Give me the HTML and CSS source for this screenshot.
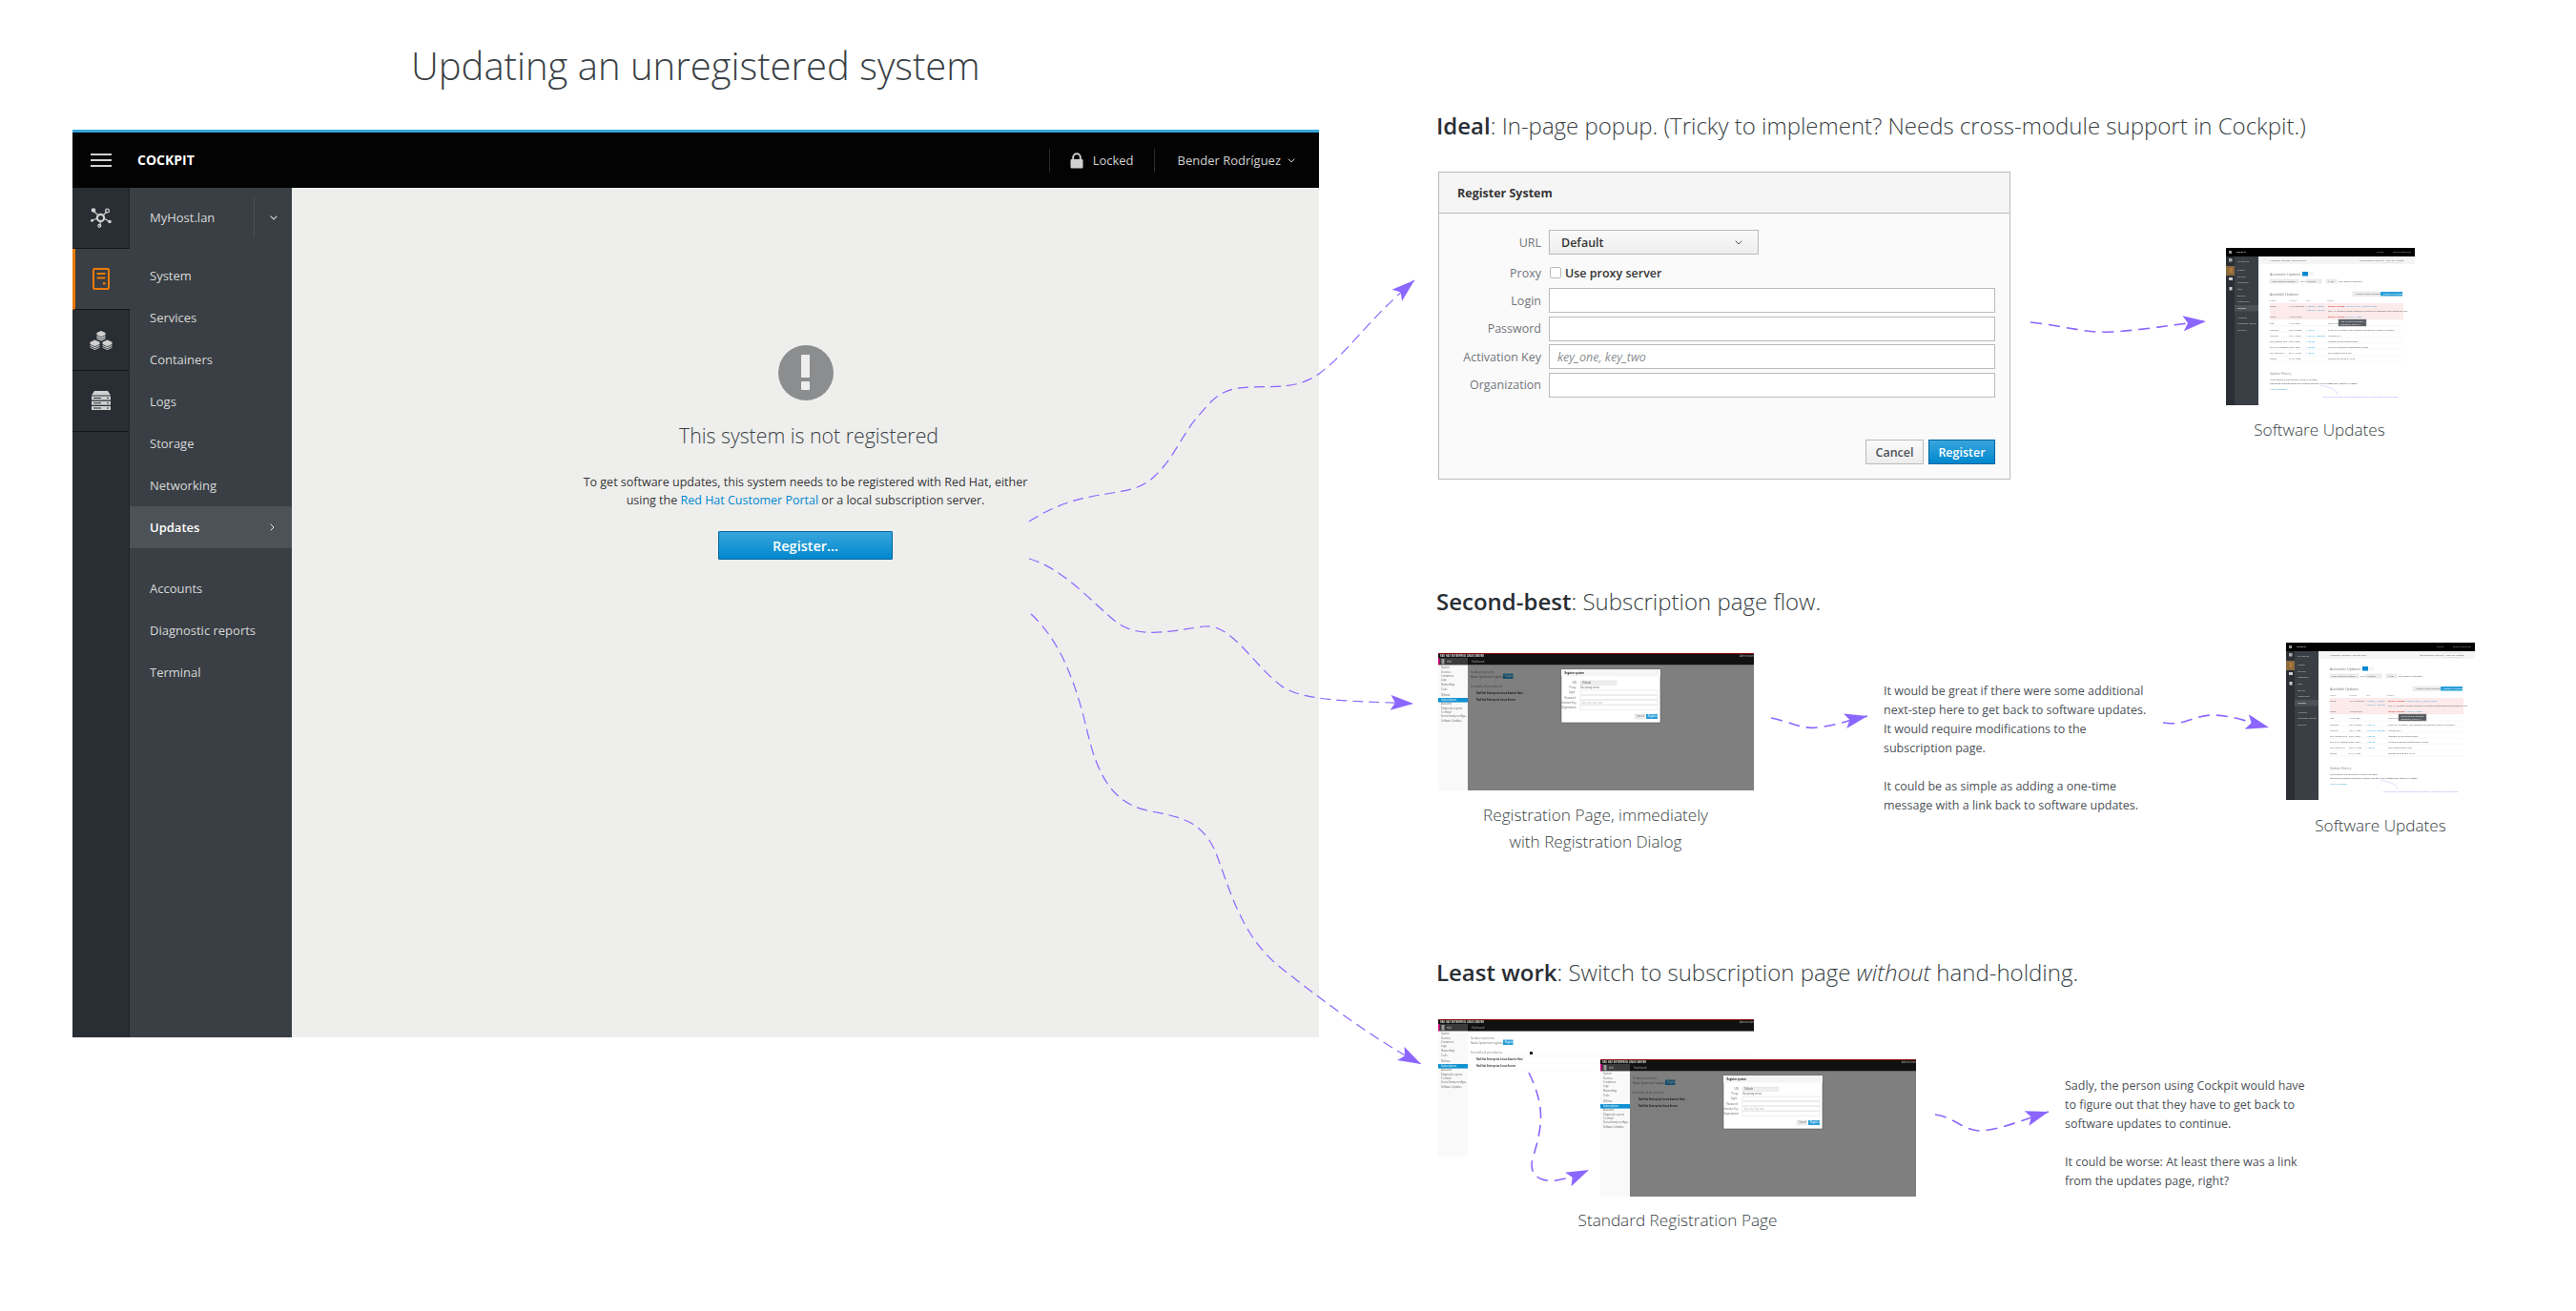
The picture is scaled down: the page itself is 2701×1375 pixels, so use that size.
FILE: index.html
```html
<!DOCTYPE html>
<html lang="en">
<head>
    <meta charset="UTF-8">
    <title>Updating an unregistered system</title>
    <link rel="stylesheet" href="styles.css">
</head>
<body>
    <svg class="defs" width="0" height="0">
        <defs>
            <symbol id="thumb-updates" viewBox="0 0 198 165" font-family="Open Sans" font-size="2.3" fill="#555">
                <rect width="198" height="165" fill="#fff"/>
                <rect width="198" height="9" fill="#000"/>
                <rect y="9" width="9" height="156" fill="#2b2f35"/>
                <rect x="9" y="9" width="25" height="156" fill="#3a3f46"/>
                <rect y="19" width="9" height="10" fill="#8b6a3c"/>
                <rect x="3" y="11" width="3.5" height="3.5" fill="#aaa"/>
                <rect x="3.5" y="21" width="3" height="5" fill="#b5793a"/>
                <rect x="3" y="31" width="4" height="3" fill="#ccc"/>
                <rect x="3.5" y="41" width="3" height="3.5" fill="#ccc"/>
                <rect x="3" y="3" width="3" height="3" fill="#999"/>
                <text x="11" y="5" fill="#ddd" font-weight="700">COCKPIT</text>
                <text x="158" y="5" fill="#aaa">Locked</text>
                <text x="175" y="5" fill="#aaa">Bender Rodríguez</text>
                <g fill="#c8c8c8">
                    <text x="12" y="14.5">MyHost.lan</text>
                    <text x="12" y="24">System</text>
                    <text x="12" y="30.5">Services</text>
                    <text x="12" y="37">Containers</text>
                    <text x="12" y="44">Logs</text>
                    <text x="12" y="50.5">Storage</text>
                    <text x="12" y="57">Networking</text>
                </g>
                <rect x="9" y="60" width="25" height="6.5" fill="#4d5258"/>
                <g fill="#c8c8c8">
                    <text x="12" y="64" fill="#fff">Updates</text>
                    <text x="12" y="73.5">Accounts</text>
                    <text x="12" y="80">Diagnostic reports</text>
                    <text x="12" y="87">Terminal</text>
                </g>
                <rect x="34" y="9" width="164" height="8" fill="#f5f5f5"/>
                <text x="46" y="14">6 updates, including 4 security fixes</text>
                <text x="140" y="14">Last checked: 3 days ago</text>
                <rect x="165" y="11" width="19" height="4.5" fill="#fafafa" stroke="#ccc" stroke-width=".4"/>
                <text x="167" y="14.2">Check for Updates</text>
                <text x="46" y="28.5" font-size="3.6" fill="#777">Automatic Updates</text>
                <rect x="80" y="25" width="6" height="4.5" fill="#0088ce"/>
                <rect x="86" y="25" width="6" height="4.5" fill="#f5f5f5"/>
                <rect x="46" y="33" width="30" height="4" fill="#eee" stroke="#ccc" stroke-width=".3"/>
                <text x="48" y="36">Apply security updates</text>
                <text x="78" y="36">every</text>
                <rect x="84" y="33" width="16" height="4" fill="#eee" stroke="#ccc" stroke-width=".3"/>
                <text x="85.5" y="36">Monday</text>
                <rect x="105" y="33" width="11" height="4" fill="#eee" stroke="#ccc" stroke-width=".3"/>
                <text x="107" y="36">11:00</text>
                <text x="118" y="36">and restart if necessary</text>
                <text x="46" y="49.5" font-size="3.6" fill="#777">Available Updates</text>
                <rect x="133" y="46" width="28" height="4.5" fill="#eee" stroke="#ccc" stroke-width=".3"/>
                <text x="136" y="49">Update Critical Packages</text>
                <rect x="162" y="46" width="23" height="4.5" fill="#2a9fd8"/>
                <text x="165" y="49" fill="#fff">Update All Packages</text>
                <g fill="#888">
                    <text x="46" y="56">Name</text>
                    <text x="66" y="56">Version</text>
                    <text x="84" y="56">Bug</text>
                    <text x="106" y="56">Details</text>
                </g>
                <rect x="46" y="58" width="140" height="17" fill="#fdeaea"/>
                <g stroke="#ececec" stroke-width=".4">
                    <path d="M46 75H186M46 82H186M46 88H186M46 94H186M46 100H186M46 106H186M46 113H186M46 119H186"/>
                </g>
                <text x="46" y="62">kernel</text>
                <text x="66" y="62">4.9.12-200.fc25</text>
                <text x="84" y="62" fill="#2a9fd8">1422327, 1420324</text>
                <text x="84" y="65.5" fill="#2a9fd8">1401243, 1400453</text>
                <text x="107" y="62" fill="#c00">Security Update:</text>
                <text x="125" y="62" fill="#2a9fd8">CVE-2017-5551, CVE-2017-2596</text>
                <text x="107" y="66.5">The 4.9.12 stable update contains a number of important fixes across the tree.</text>
                <text x="46" y="73">libpng</text>
                <text x="66" y="73">1.6.28-2.fc25</text>
                <text x="107" y="73" fill="#c00">Security Update:</text>
                <text x="125" y="73" fill="#2a9fd8">CVE-2016-10087</text>
                <text x="46" y="80">vlan</text>
                <text x="66" y="80">1.9-31.fc25</text>
                <text x="107" y="80">This is a new build</text>
                <text x="46" y="86.5">libgusb2</text>
                <text x="66" y="86.5">0.3.10-3.fc25</text>
                <text x="84" y="86.5" fill="#2a9fd8">1421543</text>
                <text x="107" y="86.5">gusb-0.3.10 release. The following includes the Fedora Hardware...</text>
                <text x="46" y="92.5">rubybuf</text>
                <text x="66" y="92.5">2.0.1-1.fc25</text>
                <text x="84" y="92.5" fill="#2a9fd8">1421340, 1385220</text>
                <text x="107" y="92.5">Version 2.0.1</text>
                <text x="46" y="98.5">perl-Module-Run</text>
                <text x="66" y="98.5">0.20-1.fc25</text>
                <text x="84" y="98.5" fill="#2a9fd8">1420433</text>
                <text x="107" y="98.5">Updated to the latest version</text>
                <text x="46" y="104.5">perl-LWP-Protocol</text>
                <text x="66" y="104.5">0.08-1.fc25</text>
                <text x="84" y="104.5" fill="#2a9fd8">1420432</text>
                <text x="107" y="104.5">Current upstream maintenance release.</text>
                <text x="46" y="111">perl-Mozilla-CA</text>
                <text x="66" y="111">20.17-1.fc25</text>
                <text x="84" y="111" fill="#2a9fd8">1420431</text>
                <text x="107" y="111">This release fixes a bug</text>
                <text x="46" y="117">vsqlite</text>
                <text x="66" y="117">2.1.0-1.fc25</text>
                <text x="107" y="117">Release to sync to 2.1.0 git</text>
                <rect x="118" y="75" width="29" height="7" fill="#555a60" stroke="#888" stroke-width=".5"/>
                <text x="120" y="78" fill="#eee">Has a security advisory:</text>
                <text x="120" y="81" fill="#eee">Important, fixed in 1</text>
                <text x="46" y="132.5" font-size="3.2" fill="#888">Update History</text>
                <text x="46" y="138.5">The following packages were recently updated:</text>
                <text x="46" y="142.8" fill="#333">vlan  kernel  libgusb2  libpng  perl-Module-Run  perl-LWP-Protocol  perl-Mozilla-CA  vsqlite</text>
                <text x="46" y="148.8" fill="#2a9fd8">View all updates...</text>
                <path d="M99 144C105 146 116 147 117 154" fill="none" stroke="#b9a6ff" stroke-width=".4"/>
                <text x="102" y="156.5" fill="#a48dff">See this is the same list of packages as above. Please ignore the duplicate.</text>
            </symbol>

            <symbol id="thumb-page" viewBox="0 0 331 144" font-family="Open Sans" font-size="2.6" fill="#666">
                <rect width="331" height="144" fill="#fff"/>
                <rect width="331" height="12.5" fill="#111"/>
                <rect width="331" height=".8" fill="#a30000"/>
                <text x="2" y="3.8" fill="#ddd" font-weight="700">RED HAT ENTERPRISE LINUX SERVER</text>
                <text x="316" y="3.8" fill="#aaa">Administrator</text>
                <rect y="5" width="31" height="7.5" fill="#3a3a3a"/>
                <rect y="5" width="1.6" height="7.5" fill="#d1007c"/>
                <rect x="3.5" y="6" width="3" height="5.5" fill="#999"/>
                <text x="9" y="9.8" fill="#ddd">rhel</text>
                <text x="35" y="9.8" fill="#aaa">Dashboard</text>
                <rect y="12.5" width="31" height="131.5" fill="#f9f9f9"/>
                <text x="3" y="16.2">System</text>
                <text x="3" y="20.5">Services</text>
                <text x="3" y="24.8">Containers</text>
                <text x="3" y="29.2">Logs</text>
                <text x="3" y="33.5">Networking</text>
                <text x="3" y="39.2">Tools</text>
                <text x="3" y="45.2">SELinux</text>
                <rect y="47" width="31" height="4.6" fill="#0f91d2"/>
                <text x="3" y="50.2" fill="#fff">Subscriptions</text>
                <text x="3" y="54.2">Accounts</text>
                <text x="3" y="58.5">Diagnostic reports</text>
                <text x="3" y="62.8">Terminal</text>
                <text x="3" y="67.2">Kernel dump configu...</text>
                <text x="3" y="71.5">Software Updates</text>
                <text x="34" y="20.5" font-size="4" fill="#888">Subscriptions</text>
                <text x="34" y="26">Status: System isn't registered</text>
                <rect x="68" y="21.5" width="10.5" height="5.5" fill="#2a9fd8"/>
                <text x="70" y="25.2" fill="#fff">Register</text>
                <text x="34" y="35.5" font-size="4" fill="#888">Installed products</text>
                <path d="M34 38.5H331M34 46H331M34 53H331" stroke="#eee" stroke-width=".4"/>
                <text x="40" y="43" fill="#444" font-weight="700">Red Hat Enterprise Linux Atomic Host</text>
                <text x="40" y="50" fill="#444" font-weight="700">Red Hat Enterprise Linux Server</text>
            </symbol>

            <symbol id="thumb-dialog" viewBox="0 0 331 144" font-family="Open Sans" font-size="2.6" fill="#666">
                <use href="#thumb-page" width="331" height="144"/>
                <rect x="31" y="12.5" width="300" height="131.5" fill="#000" opacity=".5"/>
                <rect x="129" y="17" width="104" height="56" fill="#fff" stroke="#555" stroke-width=".6"/>
                <rect x="129" y="17" width="104" height="7.5" fill="#f5f5f5"/>
                <text x="132.5" y="22" fill="#333" font-weight="700">Register system</text>
                <text x="143" y="31.8" text-anchor="middle">URL</text>
                <rect x="149" y="29" width="38" height="4.5" fill="#eee" stroke="#ccc" stroke-width=".3"/>
                <text x="151" y="32.4" fill="#444">Default</text>
                <text x="141" y="37.2" text-anchor="middle">Proxy</text>
                <text x="149" y="37.2" fill="#444">Use proxy server</text>
                <text x="140" y="42.2" text-anchor="middle">Login</text>
                <text x="138" y="47.5" text-anchor="middle">Password</text>
                <text x="136" y="52.7" text-anchor="middle">Activation Key</text>
                <text x="137" y="57.8" text-anchor="middle">Organization</text>
                <g fill="#fff" stroke="#ccc" stroke-width=".35">
                    <rect x="149" y="39" width="81" height="4.5"/>
                    <rect x="149" y="44.3" width="81" height="4.5"/>
                    <rect x="149" y="49.5" width="81" height="4.5"/>
                    <rect x="149" y="54.6" width="81" height="4.5"/>
                </g>
                <text x="151" y="52.8" fill="#aaa">key_one, key_two</text>
                <rect x="206" y="64" width="11" height="5" fill="#eee" stroke="#ccc" stroke-width=".3"/>
                <text x="208" y="67.4">Cancel</text>
                <rect x="218" y="64" width="12" height="5" fill="#2a9fd8"/>
                <text x="220" y="67.4" fill="#fff">Register</text>
            </symbol>
        </defs>
    </svg>

    <main class="board">
        <h1 class="board-title">Updating an unregistered system</h1>

        <section class="cockpit">
            <header class="topbar">
                <div class="brand">
                    <span class="hamburger"><i></i><i></i><i></i></span>
                    <span class="brand-name">COCKPIT</span>
                </div>
                <div class="topbar-right">
                    <div class="topbar-item">
                        <svg class="lock" viewBox="0 0 14 17">
                            <path d="M3.2 7V5a3.8 3.8 0 0 1 7.6 0v2" fill="none" stroke="#d1d1d1" stroke-width="1.9"/>
                            <rect x=".5" y="7" width="13" height="9.5" rx="1" fill="#d1d1d1"/>
                        </svg>
                        <span>Locked</span>
                    </div>
                    <div class="topbar-item user">
                        <span>Bender Rodríguez</span>
                        <svg class="chev" viewBox="0 0 8 5"><path d="M.7.7 4 4 7.3.7" fill="none" stroke="#d1d1d1"/></svg>
                    </div>
                </div>
            </header>

            <div class="cockpit-body">
                <nav class="rail">
                    <div class="tile">
                        <svg viewBox="0 0 22 21" width="22" height="21">
                            <g stroke="#d1d1d1" fill="none">
                                <path d="M3 3l5 5M17 4l-4 4M2 13l5-2M19 14l-5-3M9.5 19l.8-4" stroke-width="1.2"/>
                                <circle cx="10.5" cy="10.5" r="3.6" stroke-width="2.2"/>
                                <circle cx="17.5" cy="3" r="1.9" stroke-width="1.2"/>
                                <circle cx="9.3" cy="18.8" r="1.5" stroke-width="1.2"/>
                            </g>
                            <g fill="#d1d1d1">
                                <circle cx="3" cy="2.5" r="2.3"/>
                                <circle cx="1.5" cy="13.3" r="1.5"/>
                                <circle cx="20" cy="14.5" r="1.8"/>
                            </g>
                        </svg>
                    </div>
                    <div class="tile active">
                        <svg viewBox="0 0 18 23" width="18" height="23">
                            <rect x="1" y="1" width="16" height="21" rx="1" fill="none" stroke="#ec7a08" stroke-width="2"/>
                            <path d="M4.5 6H13.5M4.5 10.5H13.5" stroke="#ec7a08" stroke-width="2"/>
                            <rect x="11" y="15" width="2.5" height="2.5" fill="#ec7a08"/>
                        </svg>
                    </div>
                    <div class="tile">
                        <svg viewBox="0 0 24 20" width="24" height="20" fill="#d1d1d1">
                            <path d="M12 0l4.500 2v2.200L12 6.200 7.500 4.200V2zM7.500 5l4.500 2 4.500-2v1.400L12 8.400 7.500 6.400zM7.500 7.300l4.500 2 4.500-2v1.200L12 10.500 7.500 8.500z"/>
                            <path d="M5.500 9.500L10.500 11.700V14L5.500 16.200.5 14V11.700zM.5 14.800l5 2.200 5-2.200v1.300l-5 2.200-5-2.200zM.5 16.900l5 2.200 5-2.200v.9l-5 2.200-5-2.200z"/>
                            <path d="M18.500 9.500L23.500 11.700V14L18.500 16.200 13.500 14V11.700zM13.500 14.800l5 2.200 5-2.200v1.300l-5 2.200-5-2.200zM13.500 16.900l5 2.200 5-2.200v.9l-5 2.200-5-2.200z"/>
                        </svg>
                    </div>
                    <div class="tile">
                        <svg viewBox="0 0 20 21" width="20" height="21" fill="#d1d1d1">
                            <path d="M3 0H17L20 4.500H0z"/>
                            <path fill-rule="evenodd" d="M0 5.500H20V9.500H0zM2 7v1H10V7zM16 7v1H18V7z"/>
                            <path fill-rule="evenodd" d="M0 10.700H20V14.700H0zM2 12.200v1H10v-1zM16 12.200v1H18v-1z"/>
                            <path fill-rule="evenodd" d="M0 16H20V20H0zM2 17.500v1H10v-1zM16 17.500v1H18v-1z"/>
                        </svg>
                    </div>
                </nav>

                <nav class="sidebar">
                    <div class="host">
                        <span class="host-name">MyHost.lan</span>
                        <span class="host-toggle">
                            <svg class="chev" viewBox="0 0 8 5"><path d="M.7.7 4 4 7.3.7" fill="none" stroke="#d8d8d8" stroke-width="1.1"/></svg>
                        </span>
                    </div>
                    <ul class="menu">
                        <li>System</li>
                        <li>Services</li>
                        <li>Containers</li>
                        <li>Logs</li>
                        <li>Storage</li>
                        <li>Networking</li>
                        <li class="current">Updates
                            <svg viewBox="0 0 5 8" width="5" height="8"><path d="M.7.7 4 4 .7 7.3" fill="none" stroke="#e8e8e8"/></svg>
                        </li>
                    </ul>
                    <ul class="menu tools">
                        <li>Accounts</li>
                        <li>Diagnostic reports</li>
                        <li>Terminal</li>
                    </ul>
                </nav>

                <div class="empty-state">
                    <div class="alert-icon"><i></i><b></b></div>
                    <h2>This system is not registered</h2>
                    <p>To get software updates, this system needs to be registered with Red Hat, either<br>using the <a href="#">Red Hat Customer Portal</a> or a local subscription server.</p>
                    <button class="big-btn">Register...</button>
                </div>
            </div>
        </section>

        <h3 class="option ideal"><b>Ideal</b>: In-page popup. (Tricky to implement? Needs cross-module support in Cockpit.)</h3>

        <section class="dialog">
            <div class="dialog-head">Register System</div>
            <div class="dialog-body">
                <div class="row select-row">
                    <label>URL</label>
                    <div class="select">Default
                        <svg class="chev" viewBox="0 0 8 5"><path d="M.7.7 4 4 7.3.7" fill="none" stroke="#555"/></svg>
                    </div>
                </div>
                <div class="row proxy-row">
                    <label>Proxy</label>
                    <span class="checkbox"></span>
                    <span class="check-text">Use proxy server</span>
                </div>
                <div class="row"><label>Login</label><div class="field"></div></div>
                <div class="row"><label>Password</label><div class="field"></div></div>
                <div class="row"><label>Activation Key</label><div class="field hint">key_one, key_two</div></div>
                <div class="row"><label>Organization</label><div class="field"></div></div>
            </div>
            <div class="dialog-foot">
                <button class="btn">Cancel</button>
                <button class="btn primary">Register</button>
            </div>
        </section>

        <svg class="thumb updates-one"><use href="#thumb-updates" width="198" height="165"/></svg>
        <div class="caption updates-one-cap">Software Updates</div>

        <h3 class="option second"><b>Second-best</b>: Subscription page flow.</h3>
        <svg class="thumb reg-one"><use href="#thumb-dialog" width="331" height="144"/></svg>
        <div class="caption reg-one-cap">Registration Page, immediately<br>with Registration Dialog</div>
        <div class="note second-note">
            <p>It would be great if there were some additional next-step here to get back to software updates. It would require modifications to the subscription page.</p>
            <p>It could be as simple as adding a one-time message with a link back to software updates.</p>
        </div>
        <svg class="thumb updates-two"><use href="#thumb-updates" width="198" height="165"/></svg>
        <div class="caption updates-two-cap">Software Updates</div>

        <h3 class="option least"><b>Least work</b>: Switch to subscription page <em>without</em> hand-holding.</h3>
        <svg class="thumb reg-two"><use href="#thumb-page" width="331" height="144"/></svg>
        <span class="cursor-dot"></span>
        <svg class="thumb reg-three"><use href="#thumb-dialog" width="331" height="144"/></svg>
        <div class="caption reg-three-cap">Standard Registration Page</div>
        <div class="note least-note">
            <p>Sadly, the person using Cockpit would have to figure out that they have to get back to software updates to continue.</p>
            <p>It could be worse: At least there was a link from the updates page, right?</p>
        </div>

        <svg class="arrows" viewBox="0 0 2701 1375" width="2701" height="1375">
            <defs>
                <marker id="head" markerWidth="30" markerHeight="20" refX="24" refY="8" orient="auto" markerUnits="userSpaceOnUse">
                    <path d="M0 0L24 8 0 16 5 8z"/>
                </marker>
            </defs>
            <g class="big-curves">
                <path d="M1079 547C1110 527 1135 522 1160 518C1185 514 1197 512 1210 500C1230 482 1240 455 1255 438C1272 418 1280 407 1310 406C1340 405 1360 408 1383 392C1415 368 1430 340 1483 294" marker-end="url(#head)"/>
                <path d="M1079 586C1115 596 1145 632 1170 652C1195 672 1235 660 1263 657C1291 654 1312 695 1343 719C1365 736 1420 735 1482 738" marker-end="url(#head)"/>
                <path d="M1081 644C1115 675 1130 725 1140 767C1150 810 1165 842 1203 850C1235 857 1262 858 1277 900C1292 942 1305 985 1343 1015C1385 1048 1440 1090 1490 1116" marker-end="url(#head)"/>
            </g>
            <g class="small-curves">
                <path d="M2129 338C2165 342 2190 350 2215 348C2250 346 2280 340 2313 337" marker-end="url(#head)"/>
                <path d="M1857 753C1880 758 1890 765 1905 763C1925 761 1940 755 1958 751" marker-end="url(#head)"/>
                <path d="M2268 758C2290 762 2300 750 2320 750C2340 750 2360 758 2379 763" marker-end="url(#head)"/>
                <path d="M1603 1125C1620 1160 1618 1180 1607 1215C1602 1235 1618 1240 1632 1238C1645 1236 1655 1232 1666 1227" marker-end="url(#head)"/>
                <path d="M2029 1169C2050 1172 2060 1187 2078 1186C2100 1184 2125 1173 2148 1166" marker-end="url(#head)"/>
            </g>
        </svg>
    </main>
</body>
</html>
```

FILE: styles.css
```css
* {
    box-sizing: border-box;
}
body {
    margin: 0;
    background: #fff;
    font-family: "Open Sans", sans-serif;
    color: #363636;
}
.defs {
    position: absolute;
}
.board {
    position: relative;
    width: 2701px;
    height: 1375px;
    overflow: hidden;
}
.board-title {
    position: absolute;
    left: 431px;
    top: 41px;
    margin: 0;
    font-size: 40px;
    line-height: 56px;
    font-weight: 300;
    color: #393f44;
    white-space: nowrap;
}

/* cockpit window */
.cockpit {
    position: absolute;
    left: 76px;
    top: 136px;
    width: 1307px;
    height: 952px;
    display: flex;
    flex-direction: column;
    border-top: 3px solid #39a5dc;
}
.topbar {
    height: 58px;
    background: #030303;
    display: flex;
    align-items: center;
    justify-content: space-between;
}
.brand {
    display: flex;
    align-items: center;
    gap: 27px;
    padding-left: 19px;
}
.hamburger {
    display: flex;
    flex-direction: column;
    gap: 4px;
    width: 22px;
}
.hamburger i {
    height: 2px;
    background: #d1d1d1;
}
.brand-name {
    color: #fff;
    font-size: 14px;
    font-weight: 700;
    margin-top: -2px;
}
.topbar-right {
    display: flex;
    align-items: center;
    margin-right: 25px;
}
.topbar-item {
    display: flex;
    align-items: center;
    height: 25px;
    border-left: 1px solid #2b2b2b;
    padding: 0 21px;
    gap: 10px;
    color: #d1d1d1;
    font-size: 13px;
}
.topbar-item span {
    margin-top: -1px;
}
.topbar-item.user {
    padding: 0 0 0 24px;
    gap: 7px;
}
.lock {
    width: 14px;
    height: 17px;
}
.chev {
    width: 8px;
    height: 5px;
}
.cockpit-body {
    flex: 1;
    display: flex;
    min-height: 0;
}
.rail {
    width: 60px;
    background: #292e34;
    border-right: 1px solid #1f2328;
    display: flex;
    flex-direction: column;
}
.tile {
    height: 64px;
    display: flex;
    align-items: center;
    justify-content: center;
    border-bottom: 1px solid #14171a;
}
.tile.active {
    background: #393f44;
    border-left: 3px solid #ec7a08;
    margin-right: -1px;
    padding-right: 3px;
}
.sidebar {
    width: 170px;
    background: #393f44;
    color: #d8d8d8;
    font-size: 13px;
}
.host {
    height: 62px;
    display: flex;
    align-items: center;
    justify-content: space-between;
    padding-left: 21px;
}
.host-toggle {
    width: 40px;
    height: 42px;
    border-left: 1px solid #4a5057;
    display: flex;
    align-items: center;
    justify-content: center;
}
.menu {
    list-style: none;
    margin: 8px 0 0;
    padding: 0;
}
.menu li {
    height: 44px;
    display: flex;
    align-items: center;
    justify-content: space-between;
    padding: 0 18px 0 21px;
    white-space: nowrap;
}
.menu .current {
    background: #4d5258;
    color: #fff;
    font-weight: 600;
}
.menu.tools {
    margin-top: 20px;
}
.empty-state {
    flex: 1;
    background: #eeeeed;
    display: flex;
    flex-direction: column;
    align-items: center;
    padding-top: 165px;
}
.alert-icon {
    width: 58px;
    height: 58px;
    border-radius: 50%;
    background: #8b8d8f;
    display: flex;
    flex-direction: column;
    align-items: center;
    padding-top: 10px;
    gap: 4px;
}
.alert-icon i {
    width: 9px;
    height: 24px;
    background: #eee;
    border-radius: 1px;
}
.alert-icon b {
    width: 9px;
    height: 9px;
    background: #eee;
    border-radius: 1px;
}
.empty-state h2 {
    margin: 21px 0 0 7px;
    font-size: 21.3px;
    line-height: 32px;
    font-weight: 300;
    color: #393f44;
}
.empty-state p {
    margin: 23px 0 0;
    font-size: 12.5px;
    line-height: 19px;
    text-align: center;
    color: #363636;
}
.empty-state a {
    color: #0088ce;
    text-decoration: none;
}
.big-btn {
    margin-top: 23px;
    width: 183px;
    height: 30px;
    border: 1px solid #00659c;
    border-radius: 1px;
    background: linear-gradient(#39a5dc, #0088ce);
    color: #fff;
    font-family: inherit;
    font-size: 14.5px;
    font-weight: 600;
    padding: 0;
}

/* option headings and notes */
.option {
    position: absolute;
    left: 1506px;
    margin: 0;
    font-size: 24px;
    line-height: 34px;
    font-weight: 300;
    color: #393f44;
    white-space: nowrap;
}
.option b {
    font-weight: 600;
    color: #292e34;
}
.option.ideal {
    top: 115px;
}
.option.second {
    top: 614px;
}
.option.least {
    top: 1003px;
}
.note {
    position: absolute;
    font-size: 12.5px;
    line-height: 20px;
    color: #4d5258;
}
.note p {
    margin: 0 0 20px;
}
.second-note {
    left: 1975px;
    top: 715px;
    width: 278px;
}
.least-note {
    left: 2165px;
    top: 1129px;
    width: 262px;
}
.caption {
    position: absolute;
    text-align: center;
    font-size: 17.2px;
    line-height: 28px;
    font-weight: 300;
    color: #393f44;
    white-space: nowrap;
    transform: translateX(-50%);
}
.updates-one-cap {
    left: 2432px;
    top: 437px;
}
.updates-two-cap {
    left: 2496px;
    top: 852px;
}
.reg-one-cap {
    left: 1673px;
    top: 841px;
}
.reg-three-cap {
    left: 1759px;
    top: 1266px;
}

/* thumbnails */
.thumb {
    position: absolute;
    filter: blur(.4px);
}
.updates-one {
    left: 2334px;
    top: 260px;
    width: 198px;
    height: 165px;
}
.updates-two {
    left: 2397px;
    top: 674px;
    width: 198px;
    height: 166px;
}
.reg-one {
    left: 1508px;
    top: 685px;
    width: 331px;
    height: 144px;
}
.reg-two {
    left: 1508px;
    top: 1069px;
    width: 331px;
    height: 144px;
}
.reg-three {
    left: 1678px;
    top: 1111px;
    width: 331px;
    height: 144px;
}
.cursor-dot {
    position: absolute;
    left: 1604px;
    top: 1103px;
    width: 3px;
    height: 3px;
    background: #222;
}

/* register dialog */
.dialog {
    position: absolute;
    left: 1508px;
    top: 180px;
    width: 600px;
    height: 323px;
    border: 1px solid #bbb;
    background: #fafafa;
    display: flex;
    flex-direction: column;
    font-size: 12.5px;
}
.dialog-head {
    height: 43px;
    background: #f5f5f5;
    border-bottom: 1px solid #bbb;
    padding-left: 19px;
    display: flex;
    align-items: center;
    font-size: 12.5px;
    font-weight: 700;
    color: #363636;
}
.dialog-body {
    flex: 1;
    padding: 17px 15px 0 0;
}
.row {
    display: grid;
    grid-template-columns: 107px 1fr;
    column-gap: 8px;
    align-items: center;
    height: 26px;
    margin-bottom: 3.5px;
}
.row label {
    text-align: right;
    color: #72767b;
}
.row.select-row {
    margin-bottom: 7px;
    grid-template-columns: 107px 220px;
}
.row.proxy-row {
    grid-template-columns: 107px 21px 1fr;
    column-gap: 0;
    height: 24px;
    margin-bottom: 4px;
}
.proxy-row .checkbox {
    width: 12px;
    height: 12px;
    margin-left: 9px;
    border: 1px solid #bbb;
    border-radius: 2px;
    background: #fff;
    justify-self: start;
}
.proxy-row .check-text {
    padding-left: 4px;
    color: #363636;
    font-weight: 600;
    font-size: 12.5px;
}
.select {
    height: 26px;
    border: 1px solid #bbb;
    background: linear-gradient(#fafafa, #ededed);
    display: flex;
    align-items: center;
    justify-content: space-between;
    padding: 0 16px 0 12px;
    color: #363636;
    font-weight: 600;
}
.field {
    height: 26px;
    border: 1px solid #bbb;
    background: #fff;
}
.field.hint {
    display: flex;
    align-items: center;
    padding-left: 8px;
    font-style: italic;
    color: #8b8d8f;
}
.dialog-foot {
    display: flex;
    justify-content: flex-end;
    gap: 5px;
    padding: 0 15px 15px 0;
}
.btn {
    height: 26px;
    width: 61px;
    padding: 0;
    border: 1px solid #bbb;
    background: linear-gradient(#fafafa, #ededed);
    font-family: inherit;
    font-size: 12.5px;
    font-weight: 600;
    color: #4d5258;
}
.btn.primary {
    width: 70px;
    border-color: #00659c;
    background: linear-gradient(#39a5dc, #0088ce);
    color: #fff;
}

/* annotation arrows */
.arrows {
    position: absolute;
    left: 0;
    top: 0;
    pointer-events: none;
}
.arrows path {
    fill: none;
    stroke: #8b66ff;
}
.arrows marker path {
    fill: #8b66ff;
    stroke: none;
}
.big-curves path {
    stroke-width: 1.2px;
    stroke-dasharray: 11 6;
}
.small-curves path {
    stroke-width: 1.6px;
    stroke-dasharray: 12 7;
}
```
